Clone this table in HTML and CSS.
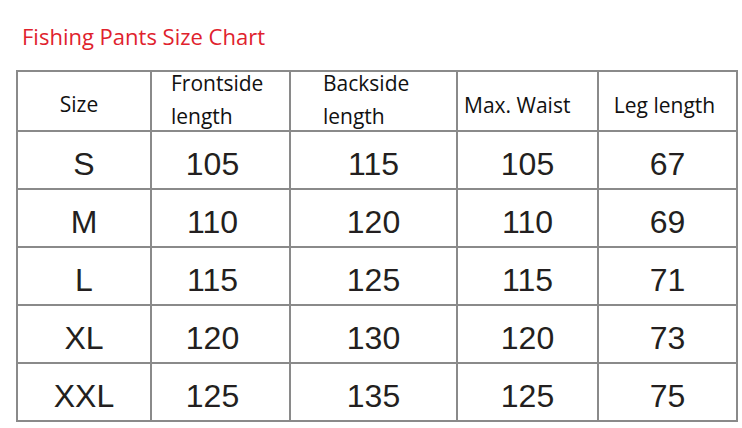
FILE: index.html
```html
<!DOCTYPE html>
<html>
<head>
<meta charset="utf-8">
<link rel="stylesheet" href="styles.css">
</head>
<body>
<h1 class="title">Fishing Pants Size Chart</h1>
<table class="chart">
  <colgroup>
    <col class="c1"><col class="c2"><col class="c3"><col class="c4"><col class="c5">
  </colgroup>
  <thead>
    <tr>
      <th><div class="hd h-size"><span>Size</span></div></th>
      <th><div class="hd h-front"><span>Frontside<br>length</span></div></th>
      <th><div class="hd h-back"><span>Backside<br>length</span></div></th>
      <th><div class="hd h-waist"><span>Max. Waist</span></div></th>
      <th><div class="hd h-leg"><span>Leg length</span></div></th>
    </tr>
  </thead>
  <tbody>
    <tr><td>S</td><td class="d2">105</td><td>115</td><td>105</td><td>67</td></tr>
    <tr><td>M</td><td class="d2">110</td><td>120</td><td>110</td><td>69</td></tr>
    <tr><td>L</td><td class="d2">115</td><td>125</td><td>115</td><td>71</td></tr>
    <tr><td>XL</td><td class="d2">120</td><td>130</td><td>120</td><td>73</td></tr>
    <tr><td>XXL</td><td class="d2">125</td><td>135</td><td>125</td><td>75</td></tr>
  </tbody>
</table>
</body>
</html>
```

FILE: styles.css
```css
html, body {
  margin: 0;
  padding: 0;
  background: #ffffff;
}
body {
  padding: 0 0 0 16px;
}
.title {
  margin: 0;
  padding: 24px 0 0 6px;
  height: 70px;
  box-sizing: border-box;
  font-family: "Open Sans", "Noto Sans", sans-serif;
  font-weight: 400;
  font-size: 22px;
  line-height: 24px;
  color: #e0222d;
}
.chart {
  border-collapse: collapse;
  table-layout: fixed;
  width: 720px;
  color: #231f20;
}
.c1 { width: 134px; }
.c2 { width: 139px; }
.c3 { width: 167px; }
.c4 { width: 141px; }
.c5 { width: 139px; }
.chart th, .chart td {
  border: 2px solid #8a8a8a;
  padding: 0;
  box-sizing: border-box;
}
.chart th {
  font-family: "Open Sans", "Noto Sans", sans-serif;
  font-weight: 400;
  font-size: 21px;
  line-height: 33px;
  color: #111;
  text-align: left;
  vertical-align: top;
}
.hd {
  height: 58px;
  box-sizing: border-box;
  display: flex;
  align-items: center;
  white-space: nowrap;
}
.hd span {
  display: block;
  text-align: left;
}
.h-size { justify-content: center; padding-right: 10px; padding-top: 6px; }
.h-front { padding-left: 19px; padding-bottom: 3px; }
.h-back { padding-left: 32px; padding-bottom: 3px; }
.h-waist { padding-left: 6px; padding-top: 8px; }
.h-leg { justify-content: center; padding-right: 6px; padding-top: 8px; }
.chart td {
  height: 58px;
  font-family: "Liberation Sans", Arial, sans-serif;
  font-size: 32px;
  line-height: 36px;
  text-align: center;
  vertical-align: middle;
  padding-top: 7px;
}
.chart .d2 { padding-right: 16px; }
```
